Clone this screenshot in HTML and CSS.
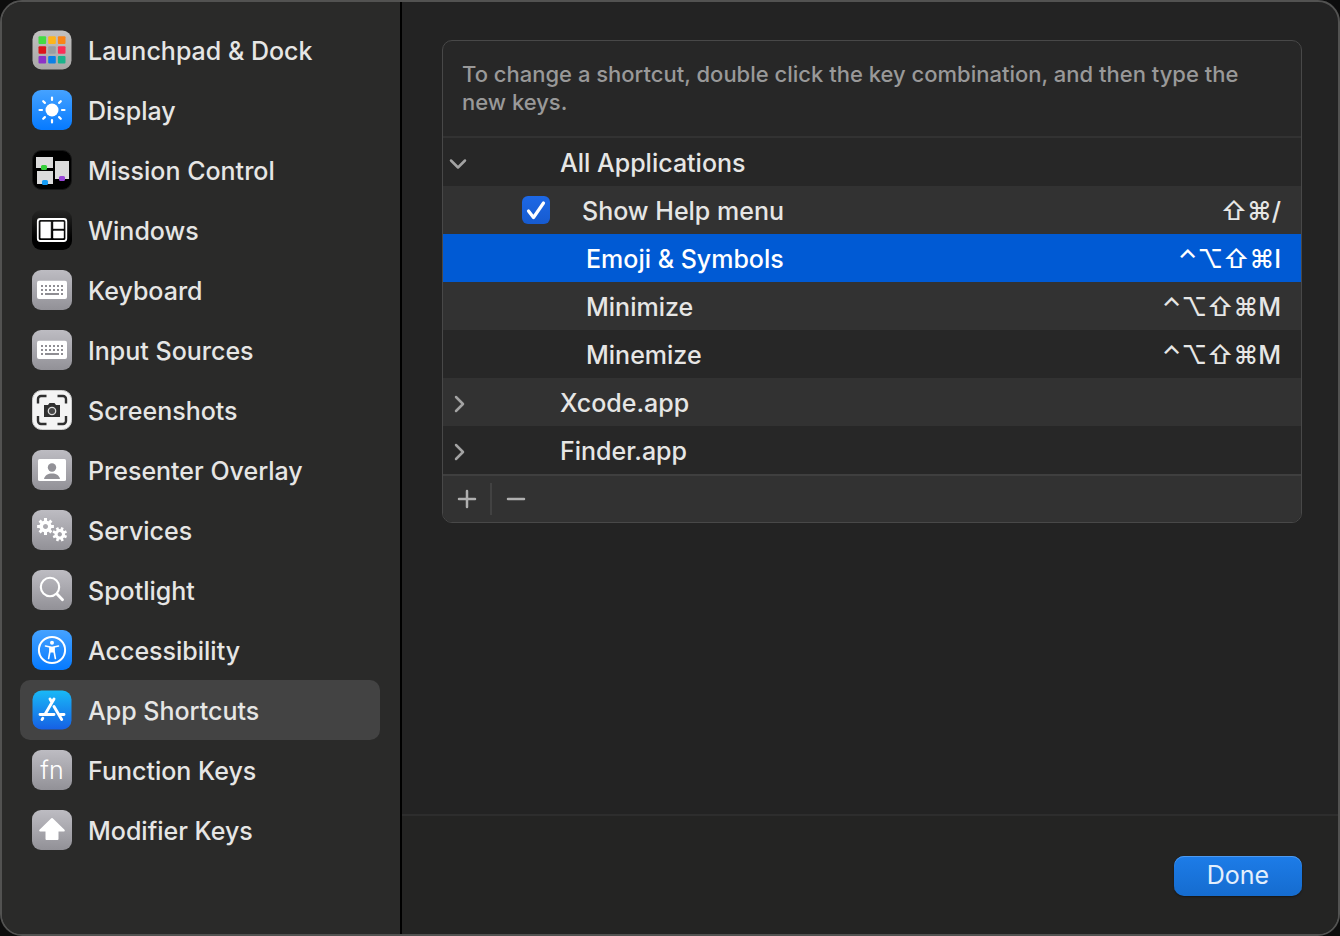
FILE: index.html
```html
<!DOCTYPE html>
<html lang="en">
<head>
<meta charset="utf-8">
<title>Keyboard Shortcuts</title>
<link rel="stylesheet" href="styles.css">
</head>
<body>
<svg class="defs" width="0" height="0" aria-hidden="true">
  <defs>
    <linearGradient id="gray" x1="0" y1="0" x2="0" y2="1"><stop offset="0" stop-color="#bdbcc2"/><stop offset="1" stop-color="#929197"/></linearGradient>
    <linearGradient id="blue" x1="0" y1="0" x2="0" y2="1"><stop offset="0" stop-color="#45a2ff"/><stop offset="1" stop-color="#067aff"/></linearGradient>
    <linearGradient id="store" x1="0" y1="0" x2="0" y2="1"><stop offset="0" stop-color="#19b9f7"/><stop offset="1" stop-color="#1660e4"/></linearGradient>
    <linearGradient id="dark" x1="0" y1="0" x2="0" y2="1"><stop offset="0" stop-color="#262625"/><stop offset="0.7" stop-color="#000"/></linearGradient>
    <linearGradient id="silver" x1="0" y1="0" x2="0" y2="1"><stop offset="0" stop-color="#c2c1c0"/><stop offset="1" stop-color="#a9a8a7"/></linearGradient>
    <symbol id="keyboard" viewBox="0 0 40 40">
      <rect width="40" height="40" rx="9" fill="url(#gray)"/>
      <rect x="5" y="10.7" width="30" height="18.3" rx="2" fill="#fff"/>
      <g stroke="#8f8e93" stroke-width="2">
        <path d="M9 16h22" stroke-dasharray="2 2"/>
        <path d="M9 20h22" stroke-dasharray="2 2"/>
        <path d="M9 24h2M13 24h14M29 24h2"/>
      </g>
    </symbol>
    <g id="gear">
      <circle r="4.3" fill="none" stroke="#fff" stroke-width="3.6"/>
      <path d="M0-8.4V-5M0 8.4V5M-8.4 0H-5M8.4 0H5M-5.9-5.9l2.4 2.4M5.9 5.9 3.5 3.5M-5.9 5.9l2.4-2.4M5.9-5.9 3.5-3.5" stroke="#fff" stroke-width="3"/>
    </g>
  </defs>
</svg>

<div class="window">
  <nav class="sidebar" aria-label="Shortcut categories">
    <a class="item" href="#launchpad">
      <svg class="icon" viewBox="0 0 40 40" aria-hidden="true">
        <rect x="0.5" y="0.5" width="39" height="39" rx="9" fill="url(#silver)"/>
        <rect x="6.5" y="6.3" width="7.6" height="7.6" rx="1" fill="#43dc43"/><rect x="16.2" y="6.3" width="7.6" height="7.6" rx="1" fill="#fdb51b"/><rect x="25.9" y="6.3" width="7.6" height="7.6" rx="1" fill="#f98417"/>
        <rect x="6.5" y="16.200" width="7.6" height="7.6" rx="1" fill="#dd151a"/><rect x="16.2" y="16.200" width="7.6" height="7.6" rx="1" fill="#9a9fa2"/><rect x="25.9" y="16.200" width="7.6" height="7.6" rx="1" fill="#fb2d58"/>
        <rect x="6.5" y="26" width="7.6" height="7.6" rx="1" fill="#8c32c8"/><rect x="16.2" y="26" width="7.6" height="7.6" rx="1" fill="#0c80e6"/><rect x="25.9" y="26" width="7.6" height="7.6" rx="1" fill="#1bb38b"/>
      </svg>
      <span>Launchpad &amp; Dock</span>
    </a>
    <a class="item" href="#display">
      <svg class="icon" viewBox="0 0 40 40" aria-hidden="true">
        <rect width="40" height="40" rx="9" fill="url(#blue)"/>
        <circle cx="20" cy="20" r="6.5" fill="#fff"/>
        <path d="M20 7.5v2.500M20 30v2.500M7.5 20H10M30 20h2.500M11.200 11.200l1.700 1.700M27.100 27.100l1.700 1.700M11.200 28.800l1.700-1.700M27.100 12.900l1.700-1.700" stroke="#fff" stroke-width="2.2" stroke-linecap="round"/>
      </svg>
      <span>Display</span>
    </a>
    <a class="item" href="#mission-control">
      <svg class="icon" viewBox="0 0 40 40" aria-hidden="true">
        <rect x="0.5" y="0.5" width="39" height="39" rx="9" fill="#000" stroke="#161616"/>
        <path d="M4 7h17v11H4zM5 21h16v13H5zM23 11h14v18H23z" fill="#dcdcdc"/>
        <rect x="9" y="15" width="6" height="5" rx="1.5" fill="#35cf3a"/>
        <rect x="10" y="30" width="6" height="5" rx="1.5" fill="#149cf5"/>
        <rect x="27" y="26" width="6" height="5" rx="1.5" fill="#9a48d8"/>
      </svg>
      <span>Mission Control</span>
    </a>
    <a class="item" href="#windows">
      <svg class="icon" viewBox="0 0 40 40" aria-hidden="true">
        <rect width="40" height="40" rx="9" fill="url(#dark)"/>
        <rect x="5.8" y="9" width="28.5" height="22" rx="2.5" fill="none" stroke="#fff" stroke-width="1.8"/>
        <path d="M8.8 12h9.800v16H8.800zM21.500 12h10v6.500h-10zM21.500 21h10v7h-10z" fill="#fff" stroke="#fff" stroke-linejoin="round" stroke-width=".6"/>
      </svg>
      <span>Windows</span>
    </a>
    <a class="item" href="#keyboard-keys">
      <svg class="icon" aria-hidden="true"><use href="#keyboard"/></svg>
      <span>Keyboard</span>
    </a>
    <a class="item" href="#input-sources">
      <svg class="icon" aria-hidden="true"><use href="#keyboard"/></svg>
      <span>Input Sources</span>
    </a>
    <a class="item" href="#screenshots">
      <svg class="icon" viewBox="0 0 40 40" aria-hidden="true">
        <rect x="0.5" y="0.5" width="39" height="39" rx="9" fill="#f4f4f4" stroke="#cfcfcf"/>
        <path d="M6 13.500V9a3 3 0 0 1 3-3h5.500M25.500 6H31a3 3 0 0 1 3 3v4.500M34 26v5a3 3 0 0 1-3 3h-5.500M14.500 34H9a3 3 0 0 1-3-3v-5" fill="none" stroke="#303030" stroke-width="2.4"/>
        <path d="M12 15h4l1.500-2h5l1.500 2h4v12H12z" fill="#303030"/>
        <circle cx="20" cy="21" r="3.7" fill="#484848" stroke="#ddd" stroke-width="1.3"/>
      </svg>
      <span>Screenshots</span>
    </a>
    <a class="item" href="#presenter">
      <svg class="icon" viewBox="0 0 40 40" aria-hidden="true">
        <rect width="40" height="40" rx="9" fill="url(#gray)"/>
        <rect x="6" y="9" width="28" height="22" rx="1.5" fill="#fff"/>
        <circle cx="20" cy="17.5" r="4.2" fill="#929197"/>
        <path d="M12 29c1-4 4-5.500 8-5.500s7 1.500 8 5.500z" fill="#929197"/>
      </svg>
      <span>Presenter Overlay</span>
    </a>
    <a class="item" href="#services">
      <svg class="icon" viewBox="0 0 40 40" aria-hidden="true">
        <rect width="40" height="40" rx="9" fill="url(#gray)"/>
        <use href="#gear" transform="translate(13.500 16.500)"/>
        <use href="#gear" transform="translate(27.800 24.300) rotate(22) scale(.87)"/>
      </svg>
      <span>Services</span>
    </a>
    <a class="item" href="#spotlight">
      <svg class="icon" viewBox="0 0 40 40" aria-hidden="true">
        <rect width="40" height="40" rx="9" fill="url(#gray)"/>
        <circle cx="18" cy="17" r="9.2" fill="none" stroke="#fff" stroke-width="2.1"/>
        <path d="m25 24 5.500 5.700" stroke="#fff" stroke-width="2.9" stroke-linecap="round"/>
      </svg>
      <span>Spotlight</span>
    </a>
    <a class="item" href="#accessibility">
      <svg class="icon" viewBox="0 0 40 40" aria-hidden="true">
        <rect width="40" height="40" rx="9" fill="url(#blue)"/>
        <circle cx="20" cy="20" r="13.1" fill="none" stroke="#fff" stroke-width="2"/>
        <circle cx="20" cy="12.8" r="2" fill="#fff"/>
        <path d="M13.500 16 18 17v4l-1.400 7.500M26.500 16 22 17v4l1.400 7.500" fill="none" stroke="#fff" stroke-width="1.6" stroke-linecap="round" stroke-linejoin="round"/>
        <path d="M17.500 16.500h5L22.500 22.500h-5z" fill="#fff"/>
      </svg>
      <span>Accessibility</span>
    </a>
    <a class="item selected" href="#app-shortcuts" aria-current="page">
      <svg class="icon" viewBox="0 0 40 40" aria-hidden="true">
        <rect x="0.5" y="0.5" width="39" height="39" rx="9" fill="url(#store)"/>
        <g fill="none" stroke="#fff" stroke-width="2.9" stroke-linecap="round">
          <path d="M22 9 13.500 23.500M10.800 28.200l-.8 1.400M18 9l1.700 2.900M22 16.500l7.700 13M8 24.500h14M28.500 24.500H32"/>
        </g>
      </svg>
      <span>App Shortcuts</span>
    </a>
    <a class="item" href="#function-keys">
      <span class="icon fn" aria-hidden="true">fn</span>
      <span>Function Keys</span>
    </a>
    <a class="item" href="#modifier-keys">
      <svg class="icon" viewBox="0 0 40 40" aria-hidden="true">
        <rect width="40" height="40" rx="9" fill="url(#gray)"/>
        <path d="M20 9 31.800 20.500H25.500V29H14.500V20.500H8.200z" fill="#fff" stroke="#fff" stroke-width="2" stroke-linejoin="round"/>
      </svg>
      <span>Modifier Keys</span>
    </a>
  </nav>

  <main class="content">
    <div class="body">
      <section class="panel">
        <p class="hint">To change a shortcut, double click the key combination, and then type the new keys.</p>
        <table class="shortcuts">
          <colgroup><col class="col-toggle"><col class="col-check"><col><col class="col-keys"></colgroup>
          <tbody>
            <tr>
              <td class="toggle"><button type="button" class="disclosure" aria-label="Collapse All Applications" aria-expanded="true"><svg width="16" height="16" viewBox="0 0 16 16"><path d="m1 5.500 7 7 7-7"/></svg></button></td>
              <td></td><td>All Applications</td><td class="keys"></td>
            </tr>
            <tr>
              <td></td>
              <td class="check"><input type="checkbox" id="show-help" checked></td>
              <td class="checkable"><label for="show-help">Show Help menu</label></td>
              <td class="keys">⇧⌘/</td>
            </tr>
            <tr class="current" aria-selected="true"><td></td><td></td><td class="child">Emoji &amp; Symbols</td><td class="keys">⌃⌥⇧⌘I</td></tr>
            <tr><td></td><td></td><td class="child">Minimize</td><td class="keys">⌃⌥⇧⌘M</td></tr>
            <tr><td></td><td></td><td class="child">Minemize</td><td class="keys">⌃⌥⇧⌘M</td></tr>
            <tr>
              <td class="toggle"><button type="button" class="disclosure" aria-label="Expand Xcode.app" aria-expanded="false"><svg width="16" height="16" viewBox="0 0 16 16"><path d="m6 2 7 7-7 7"/></svg></button></td>
              <td></td><td>Xcode.app</td><td class="keys"></td>
            </tr>
            <tr>
              <td class="toggle"><button type="button" class="disclosure" aria-label="Expand Finder.app" aria-expanded="false"><svg width="16" height="16" viewBox="0 0 16 16"><path d="m6 2 7 7-7 7"/></svg></button></td>
              <td></td><td>Finder.app</td><td class="keys"></td>
            </tr>
          </tbody>
        </table>
        <div class="actions">
          <button type="button" class="action" aria-label="Add shortcut"><svg width="20" height="20" viewBox="0 0 20 20"><path d="M2 10h16M10 2v16"/></svg></button>
          <span class="separator"></span>
          <button type="button" class="action" aria-label="Remove shortcut"><svg width="20" height="20" viewBox="0 0 20 20"><path d="M2 10h16"/></svg></button>
        </div>
      </section>
    </div>
    <footer class="footer"><button type="button" class="done">Done</button></footer>
  </main>
</div>
</body>
</html>
```
FILE: styles.css
```css
* {
  box-sizing: border-box;
}

body {
  margin: 0;
  background: #0d0d0d;
  color: #e6e6e5;
  font: 500 25px/32px Inter, "Liberation Sans", sans-serif;
}

button {
  padding: 0;
  border: 0;
  background: none;
  color: inherit;
  font: inherit;
}

svg {
  display: block;
  overflow: visible;
}

.defs {
  position: absolute;
}

.window {
  display: flex;
  min-height: 100vh;
  overflow: hidden;
  border: 2px solid #525251;
  border-radius: 22px;
  background: #232323;
}

.sidebar {
  flex: none;
  width: 400px;
  padding: 18px 20px 18px 18px;
  border-right: 2px solid #000;
  background: #2a2a29;
}

.item {
  display: flex;
  align-items: center;
  gap: 16px;
  height: 60px;
  padding: 0 12px;
  border-radius: 10px;
  color: inherit;
  line-height: 30px;
  text-decoration: none;
  white-space: nowrap;
}

.item span:last-child {
  padding-top: 2px;
}

.item.selected {
  background: #434343;
}

.icon {
  flex: none;
  width: 40px;
  height: 40px;
}

.fn {
  border-radius: 9px;
  background: linear-gradient(#bdbcc2, #929197);
  color: #fff;
  font-size: 25px;
  font-weight: 300;
  line-height: 40px;
  text-align: center;
}

.content {
  display: flex;
  flex: 1;
  flex-direction: column;
  min-width: 0;
}

.body {
  flex: 1;
  padding: 38px 36px 38px 40px;
}

.panel {
  overflow: hidden;
  border: 1px solid #484848;
  border-radius: 10px;
  background: #272727;
}

.hint {
  margin: 0;
  padding: 19px 19px 20px;
  border-bottom: 2px solid #323232;
  color: #999;
  font-size: 22px;
  line-height: 28px;
}

.shortcuts {
  width: 100%;
  table-layout: fixed;
  border-collapse: collapse;
}

.shortcuts tr:nth-child(even) {
  background: #323232;
}

.shortcuts tr.current {
  background: #005ad4;
  color: #fff;
}

.shortcuts td {
  height: 48px;
  padding: 2px 0 0;
}

.col-toggle {
  width: 79px;
}

.col-check {
  width: 38px;
}

.col-keys {
  width: 200px;
}

.shortcuts .toggle {
  padding-left: 7px;
}

.shortcuts .check {
  padding-top: 0;
}

.shortcuts .checkable {
  padding-left: 22px;
}

.shortcuts .child {
  padding-left: 26px;
}

.shortcuts .keys {
  padding-right: 20px;
  text-align: right;
}

.disclosure {
  display: block;
}

.disclosure path {
  fill: none;
  stroke: #a3a3a3;
  stroke-width: 2.5;
  stroke-linecap: round;
  stroke-linejoin: round;
}

.check input {
  display: block;
  width: 28px;
  height: 28px;
  margin: 0;
  border-radius: 6px;
  appearance: none;
  background: #1b63db;
}

.check input:checked {
  background: url("data:image/svg+xml,%3Csvg xmlns='http://www.w3.org/2000/svg' viewBox='0 0 28 28'%3E%3Cpath d='m6.500 15 5 6.500L21.500 7' fill='none' stroke='%23fff' stroke-width='3.200' stroke-linecap='round' stroke-linejoin='round'/%3E%3C/svg%3E") center / 28px no-repeat, linear-gradient(#1d68e5, #165bd0);
}

.actions {
  display: flex;
  align-items: center;
  height: 48px;
  border-top: 2px solid #3f3f3f;
  background: #323232;
}

.action {
  display: grid;
  place-items: center;
  width: 47px;
  height: 44px;
}

.action path {
  fill: none;
  stroke: #b0b0b0;
  stroke-width: 2.5;
  stroke-linecap: round;
}

.separator {
  width: 2px;
  height: 32px;
  background: #424242;
}

.footer {
  display: flex;
  justify-content: flex-end;
  padding: 40px 36px 38px;
  border-top: 2px solid #2d2d2d;
  background: #242423;
}

.done {
  width: 128px;
  height: 40px;
  padding-bottom: 2px;
  border-radius: 10px;
  background: linear-gradient(#1d7ce8, #156ccf);
  box-shadow: inset 0 1px #4d9af0, 0 1px 2px #0006;
  color: #e4effc;
  font-weight: 400;
}
```
